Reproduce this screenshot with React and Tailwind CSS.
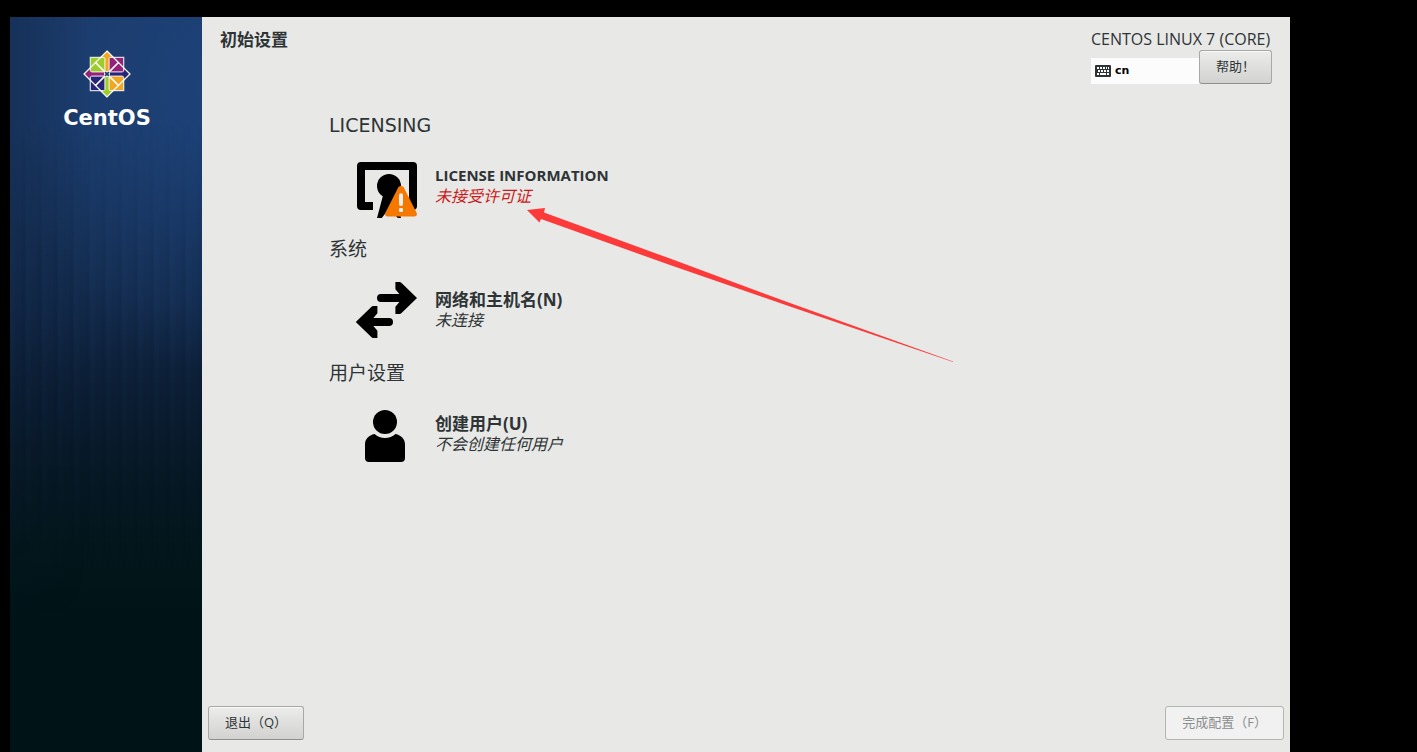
import { clsx } from "clsx"

const Logo = () => (
    <svg width="48" height="48" viewBox="-23 -23 46 46" aria-hidden="true">
        <path d="M-16-16H0V0H-16Z" fill="#9ccd2a" />
        <path d="M0-16H16V0H0Z" fill="#932279" />
        <path d="M-16 0H0V16H-16Z" fill="#262577" />
        <path d="M0 0H16V16H0Z" fill="#efa724" />
        {/* arrow heads outside of the square */}
        <path d="M-6-16 0-22 6-16Z" fill="#efa724" />
        <path d="M16-6 22 0 16 6Z" fill="#262577" />
        <path d="M-6 16 0 22 6 16Z" fill="#9ccd2a" />
        <path d="M-16-6-22 0-16 6Z" fill="#932279" />
        {/* outlines */}
        <g fill="none" stroke="#fff" strokeWidth="1.2">
            <path d="M-16-16h32v32h-32Z" strokeOpacity=".8" />
            <path d="M0-22 11-11 0 0-11-11Z" />
            <path d="M22 0 11 11 0 0 11-11Z" />
            <path d="M0 22-11 11 0 0 11 11Z" />
            <path d="M-22 0-11-11 0 0-11 11Z" />
        </g>
        {/* arrow shafts */}
        <g stroke="#fff" strokeWidth=".9">
            <path d="M-2-2V-16H2V-2Z" fill="#efa724" />
            <path d="M2-2H16V2H2Z" fill="#262577" />
            <path d="M-2 2V16H2V2Z" fill="#9ccd2a" />
            <path d="M-2-2H-16V2H-2Z" fill="#932279" />
        </g>
        <path d="M-3.500-17 0-20.500 3.500-17 1.500-15h-3Z" fill="#efa724" />
        <path d="M17-3.500 20.500 0 17 3.500 15 1.500v-3Z" fill="#262577" />
        <path d="M-3.500 17 0 20.500 3.500 17 1.500 15h-3Z" fill="#9ccd2a" />
        <path d="M-17-3.500-20.500 0-17 3.500-15 1.500v-3Z" fill="#932279" />
        <path d="M-2.500-2.500h5v5h-5Z" fill="#fff" />
        <path d="M-1.800-1.800 1.800 1.800M1.800-1.800-1.800 1.800" stroke="#1c3b70" strokeWidth="1.600" />
    </svg>
)

const KeyboardIcon = () => (
    <svg width="16" height="12" viewBox="0 0 16 12" aria-hidden="true">
        <rect width="16" height="12" rx="1" fill="#2e3436" />
        <path
            d="M2 2h2v2H2zM5 2h2v2H5zM8 2h2v2H8zM11 2h1v2h-1zM13 2h1v2h-1zM3 5h2v2H3zM6 5h2v2H6zM9 5h2v2H9zM12 5h2v2h-2zM2 8h2v2H2zM5 8h6v2H5zM12 8h2v2h-2z"
            fill="#fcfcfc"
        />
    </svg>
)

const LicenseIcon = () => (
    <svg className="size-16" viewBox="0 0 16 16" aria-hidden="true">
        <path d="M2 2h13a1 1 0 0 1 1 1v10a1 1 0 0 1-1 1h-1V4H3v8h2v2H2a1 1 0 0 1-1-1V3a1 1 0 0 1 1-1Z" />
        <circle cx="9" cy="8" r="3" />
        <path d="M7.600 10h2.900l1.500 6h-.8L9 13.600 7.200 16H6Z" />
        <path
            d="M11.300 8.400c.3-.5 1.100-.5 1.400 0l3.200 6.300c.2.500 0 .9-.5.900H8.600c-.5 0-.7-.4-.5-.9Z"
            fill="#f57900"
        />
        <rect x="11.500" y="9.800" width="1" height="3.200" rx=".5" fill="#eeeeec" />
        <rect x="11.500" y="13.500" width="1" height="1" rx=".3" fill="#eeeeec" />
    </svg>
)

const NetworkIcon = () => (
    <svg className="size-16" viewBox="0 0 16 16" aria-hidden="true">
        <path d="M7 4h4.600L10.600 2.800V1h.9c.3 0 .5.100.7.300L16 5l-3.800 3.700c-.2.200-.4.300-.7.300h-.9V7.200L11.600 6H7a1 1 0 0 1 0-2Z" />
        <path d="M9 10H5.100l1-1.200V7h-.9c-.3 0-.5.100-.7.300L.7 11l3.800 3.700c.2.200.4.300.7.300h.9v-1.800L5.100 12H9a1 1 0 0 0 0-2Z" />
    </svg>
)

const UserIcon = () => (
    <svg className="size-16" viewBox="0 0 16 16" aria-hidden="true">
        <circle cx="8" cy="5" r="3" />
        <path d="M5.400 8c-1.500.3-2.400 1.300-2.400 2.600V14a1 1 0 0 0 1 1h8a1 1 0 0 0 1-1v-3.400c0-1.300-.9-2.300-2.400-2.600-.7.700-1.600 1-2.600 1s-1.900-.3-2.600-1Z" />
    </svg>
)

const sections = [
    {
        heading: "LICENSING",
        title: "LICENSE INFORMATION",
        titleSize: "text-[15px]",
        status: "未接受许可证",
        warning: true,
        Icon: LicenseIcon,
    },
    {
        heading: "系统",
        title: "网络和主机名(N)",
        titleSize: "text-[17px]",
        status: "未连接",
        Icon: NetworkIcon,
    },
    {
        heading: "用户设置",
        title: "创建用户(U)",
        titleSize: "text-[17px]",
        status: "不会创建任何用户",
        Icon: UserIcon,
    },
]

const Button = ({ children, disabled }) => (
    <button
        type="button"
        disabled={disabled}
        className={clsx(
            "h-[34px] rounded-[3px] border px-4 pb-[2px] text-[13px] leading-5",
            disabled
                ? "border-[#b4b4b0] bg-[#f1f1f1] text-[#8b8e8f]"
                : "border-[#a8a8a4] border-b-[#8f8f8b] bg-linear-to-b from-[#ececeb] to-[#d2d2d0] shadow-[inset_0_1px_0_#f8f8f8]"
        )}>
        {children}
    </button>
)

const Sidebar = () => (
    <aside className="w-48 shrink-0 bg-[linear-gradient(to_bottom,#1b3a69_0px,#1b3a69_110px,#17325a_200px,#12294a_290px,#0c1e35_370px,#071826_450px,#03161b_530px,#001417_610px)]">
        <div className="h-full bg-[radial-gradient(ellipse_180px_280px_at_100%_70px,#1f498780,transparent)]">
            <div className="h-[600px] bg-[linear-gradient(to_right,#0b1a2c40,transparent_40%)] mask-[linear-gradient(to_bottom,black_300px,transparent)]">
                <div className="h-full bg-[repeating-linear-gradient(to_right,#5080b009_0px,#5080b009_4px,transparent_6px,transparent_11px,#0000000c_13px,transparent_16px)] mask-[linear-gradient(to_bottom,transparent_100px,black_250px,black_450px,transparent)]" />
            </div>
        </div>
    </aside>
)

const App = () => {
    return (
        <div className="flex min-h-screen bg-black pt-[17px] pr-[127px] pl-[10px] font-['Open_Sans','Noto_Sans_CJK_SC',sans-serif] text-[#2e3436]">
            <div className="relative flex">
                <Sidebar />
                <div className="absolute inset-x-0 top-[33px] flex flex-col items-center pl-[2px]">
                    <Logo />
                    <span className="mt-2 font-['DejaVu_Sans',sans-serif] text-[21px] leading-6 font-bold text-white">CentOS</span>
                </div>
            </div>

            <main className="relative flex flex-1 flex-col bg-[#e8e8e6]">
                <header className="flex h-24 justify-between px-[18px] pt-3">
                    <h1 className="text-[17px] leading-[21px] font-bold">初始设置</h1>
                    <div>
                        <p className="text-[16px] leading-[21px]">CENTOS LINUX 7 (CORE)</p>
                        <div className="flex items-end">
                            <button type="button" className="flex h-[26px] w-[108px] items-center gap-1 bg-[#fcfcfc] px-1 font-['DejaVu_Sans',sans-serif] text-[11px] font-bold text-black">
                                <KeyboardIcon />
                                cn
                            </button>
                            <Button>帮助！</Button>
                        </div>
                    </div>
                </header>

                <div className="flex-1 pl-[127px]">
                    {sections.map(({ heading, title, titleSize, status, warning, Icon }) => (
                        <section key={heading} className="mb-[19px]">
                            <h2 className="font-['DejaVu_Sans','Noto_Sans_CJK_SC',sans-serif] text-[19px] leading-6">{heading}</h2>
                            <button type="button" className="mt-[17px] ml-6 flex items-center gap-[18px] text-left">
                                <span className="text-black"><Icon /></span>
                                <span className="flex flex-col leading-[21px]">
                                    <span className={clsx("font-bold", titleSize)}>{title}</span>
                                    <span className={clsx("text-[16px] italic", warning && "text-[#cc1a1a]")}>{status}</span>
                                </span>
                            </button>
                        </section>
                    ))}
                </div>

                <footer className="flex justify-between px-[6px] pb-3">
                    <Button>退出（Q）</Button>
                    <Button disabled>完成配置（F）</Button>
                </footer>

                {/* pointer to the licence entry */}
                <svg className="pointer-events-none absolute top-[190px] left-[324px]" width="430" height="158" viewBox="526 207 430 158" aria-hidden="true">
                    <path d="M527 210 545 208 544 212.500 670 258.600 790 303 953 361.500V362L790 306.500 670 265 541 219 539.500 222.500Z" fill="#fd3a3a" />
                </svg>
            </main>
        </div>
    )
}

export default App
